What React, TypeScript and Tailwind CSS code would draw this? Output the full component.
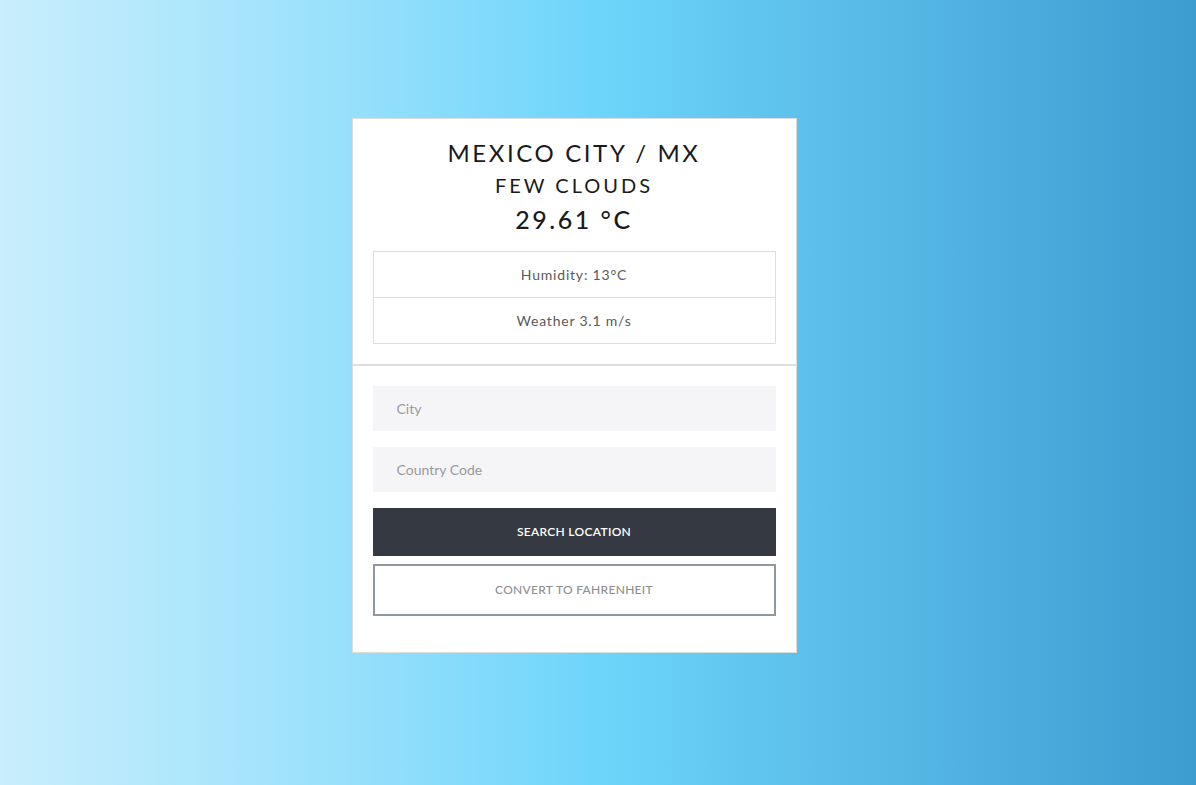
import { useState } from "react";

export default function App() {
  const [unit, setUnit] = useState<"C" | "F">("C");
  const temp = 29.61;
  const shown = unit === "C" ? temp : (temp * 9) / 5 + 32;

  return (
    <div
      className="min-h-[785px] w-full flex items-start justify-center bg-gradient-to-r from-[#c9eefc] via-[#6dd5fa] to-[#3d9bd0] pt-[118px] pr-12"
      style={{ fontFamily: "Lato, 'Open Sans', sans-serif" }}
    >
      <div className="w-[445px] h-[535px] bg-white border border-[#dcdcdc]">
        {/* current weather */}
        <div className="px-5 pt-[17px] pb-[20px] border-b-2 border-[#dedede] text-center">
          <h1 className="text-[24px] leading-[34px] tracking-[2.6px] text-[#1b1b1b] uppercase">Mexico City / MX</h1>
          <h2 className="text-[20px] leading-[30px] tracking-[3px] text-[#1b1b1b] uppercase">Few Clouds</h2>
          <p className="text-[25px] leading-[38px] tracking-[2.5px] text-[#1b1b1b] font-medium">
            {shown.toFixed(2)} °{unit}
          </p>
          <ul className="mt-[13px] border border-[#dedede] text-[14px] text-[#5a5a5a] tracking-[0.8px]">
            <li className="h-[46px] flex items-center justify-center border-b border-[#dedede]">Humidity: 13°C</li>
            <li className="h-[45px] flex items-center justify-center">Weather 3.1 m/s</li>
          </ul>
        </div>

        {/* search form */}
        <form className="px-5 pt-5 flex flex-col" onSubmit={(e) => e.preventDefault()}>
          <input
            className="h-[45px] bg-[#f5f5f7] px-6 text-[14px] text-[#555] placeholder:text-[#9a9a9a] outline-none"
            placeholder="City"
          />
          <input
            className="mt-4 h-[45px] bg-[#f5f5f7] px-6 text-[14px] text-[#555] placeholder:text-[#9a9a9a] outline-none"
            placeholder="Country Code"
          />
          <button className="mt-4 h-[48px] bg-[#353941] text-white text-[12px] font-semibold uppercase tracking-[0.3px]">
            Search Location
          </button>
          <button
            type="button"
            onClick={() => setUnit(unit === "C" ? "F" : "C")}
            className="mt-2 h-[52px] border-2 border-[#8f98a0] bg-white text-[#8f8f8f] text-[12px] font-medium uppercase tracking-[0.3px]"
          >
            Convert to {unit === "C" ? "Fahrenheit" : "Celsius"}
          </button>
        </form>
      </div>
    </div>
  );
}
